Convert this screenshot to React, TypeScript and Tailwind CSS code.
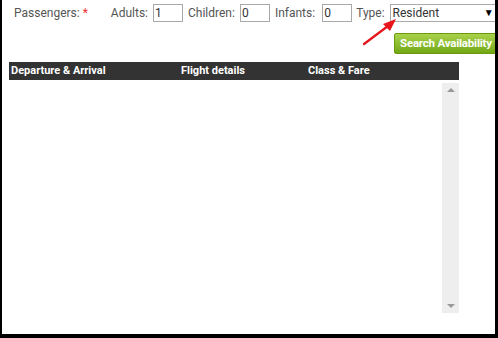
import React from "react";

function NumBox({ value }: { value: string }) {
  return (
    <div className="h-[18px] w-[30px] border border-[#a9a9a9] bg-white pl-[1px] text-[12px] leading-[16px] text-[#333]">
      {value}
    </div>
  );
}

export default function App() {
  return (
    <div className="relative h-[338px] w-[498px] overflow-hidden border-b-4 border-l-2 border-r-[3px] border-black bg-white font-['Roboto',sans-serif] text-[12px] text-[#555]">
      <div className="flex h-[22px] items-end whitespace-nowrap pt-[4px]">
        <span className="ml-[12px] leading-[18px]">Passengers:</span>
        <span className="ml-[3px] leading-[18px] text-[#e33]">*</span>
        <span className="ml-[23px] leading-[18px]">Adults:</span>
        <div className="ml-[5px]">
          <NumBox value="1" />
        </div>
        <span className="ml-[5px] leading-[18px]">Children:</span>
        <div className="ml-[5px]">
          <NumBox value="0" />
        </div>
        <span className="ml-[5px] leading-[18px]">Infants:</span>
        <div className="ml-[7px]">
          <NumBox value="0" />
        </div>
        <span className="ml-[4px] leading-[18px]">Type:</span>
        <div className="ml-[5px] flex h-[18px] w-[108px] shrink-0 items-center justify-between border border-[#a9a9a9] pl-[2px] pr-[3px] text-[#333]">
          <span className="leading-[16px]">Resident</span>
          <span className="text-[10px] leading-none text-black">▼</span>
        </div>
      </div>

      <div className="mt-[11px] flex justify-end">
        <button className="-mr-[14px] h-[21px] w-[115px] shrink-0 rounded-[2px] border border-[#6b9a10] bg-gradient-to-b from-[#a9d24a] to-[#72a812] pl-[5px] text-left text-[11.5px] font-bold leading-[19px] tracking-[-0.2px] text-white">
          Search Availability
        </button>
      </div>

      <div className="ml-[7px] mt-[8px] w-[450px]">
        <div className="flex h-[18px] items-center bg-[#333333] text-[11px] font-bold text-white">
          <span className="ml-[2px] w-[170px]">Departure &amp; Arrival</span>
          <span className="w-[127px]">Flight details</span>
          <span>Class &amp; Fare</span>
        </div>
        <div className="flex justify-end pt-[3px]">
          <div className="flex h-[230px] w-[17px] flex-col items-center justify-between bg-[#eeeeee] py-[5px]">
            <div className="h-0 w-0 border-x-[4px] border-b-[4px] border-x-transparent border-b-[#999]" />
            <div className="h-0 w-0 border-x-[4px] border-t-[4px] border-x-transparent border-t-[#999]" />
          </div>
        </div>
      </div>

      <svg className="absolute left-0 top-0" width="498" height="338" viewBox="0 0 498 338">
        <line x1="362" y1="44" x2="386" y2="26" stroke="#e8141b" strokeWidth="2.2" strokeLinecap="round" />
        <polygon points="394,19 381,24 388,31" fill="#e8141b" />
      </svg>
    </div>
  );
}
